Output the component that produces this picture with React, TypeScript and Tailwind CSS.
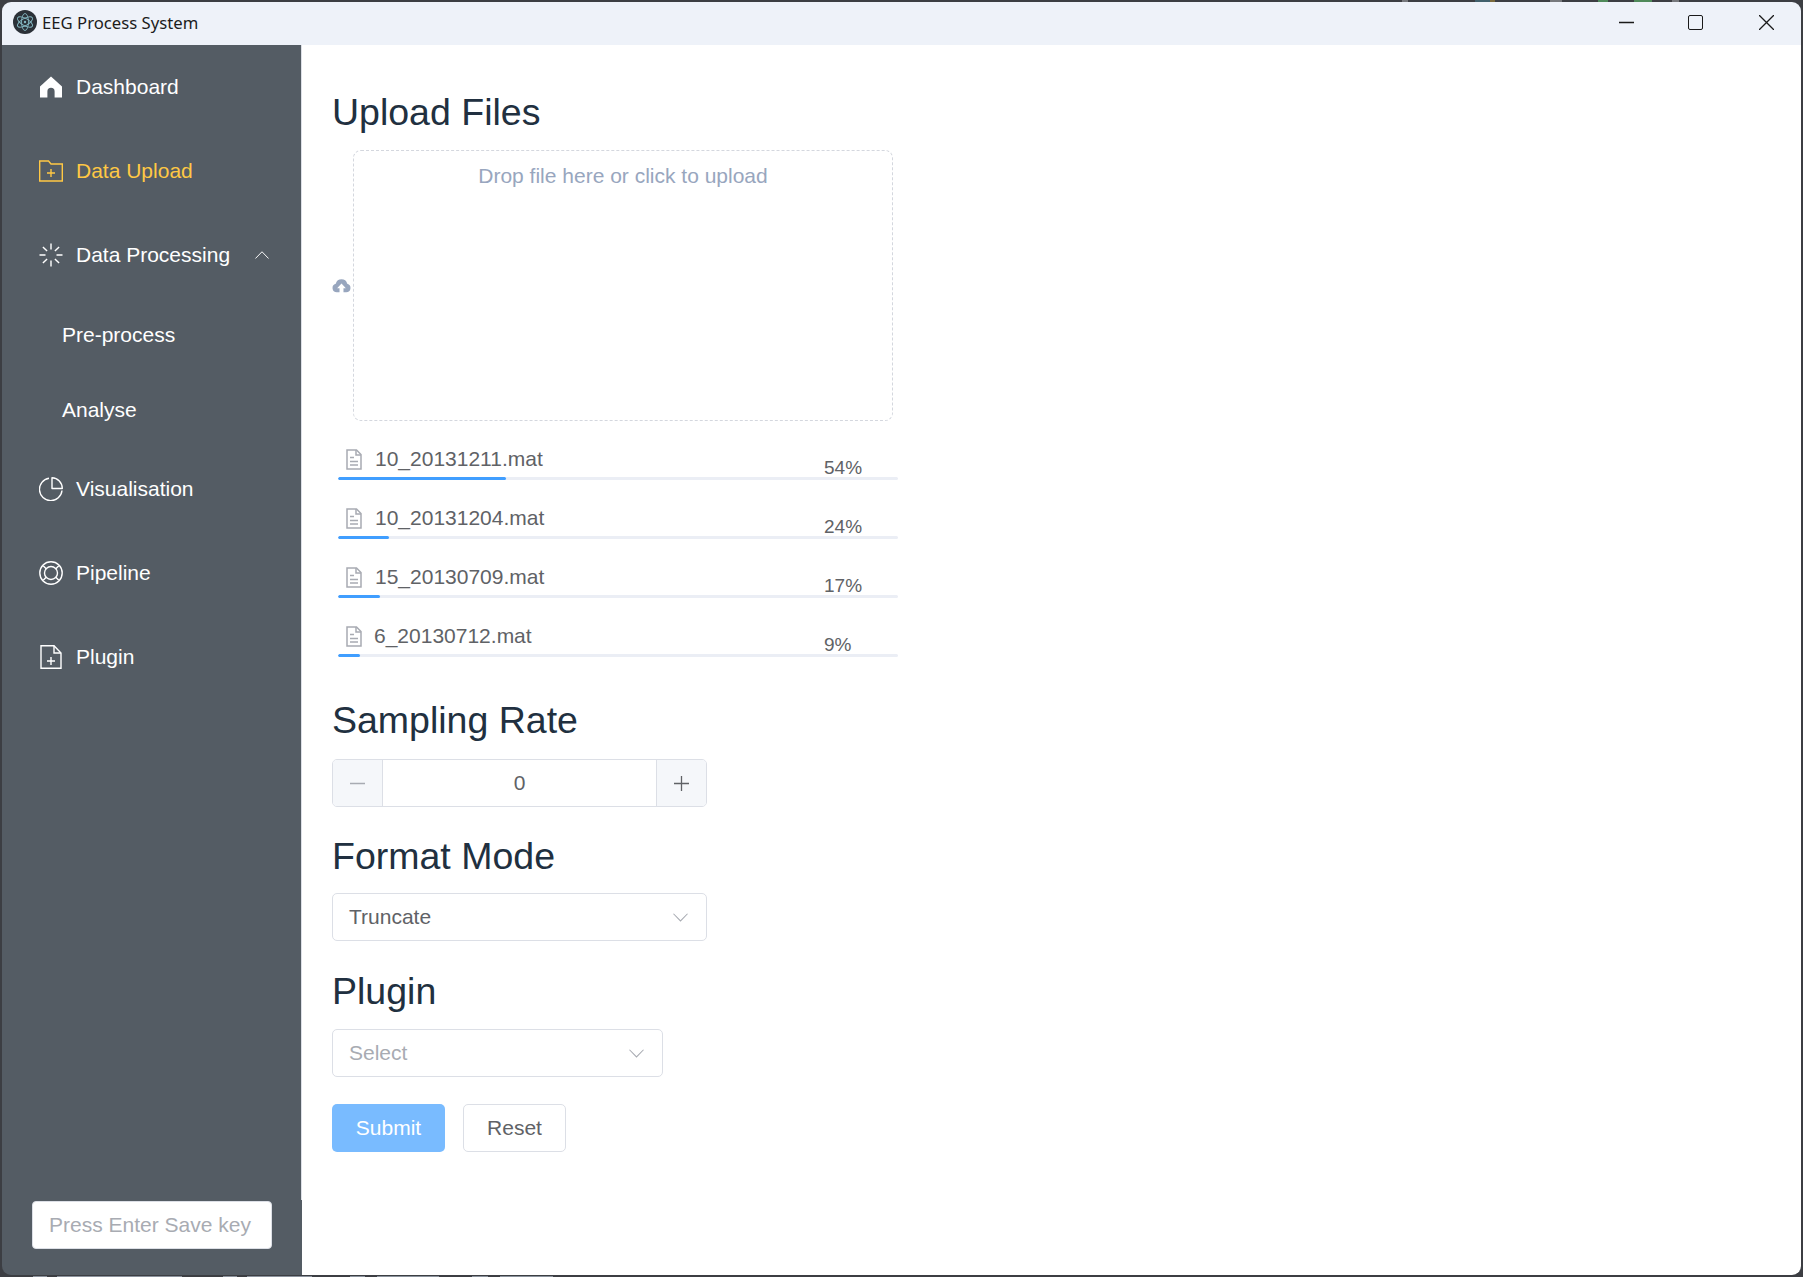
import React from 'react';

const font = 'font-["Liberation_Sans",Arial,sans-serif]';

const HomeIcon = () => (
  <svg viewBox="0 0 24 24" className="h-6 w-6" fill="white">
    <path d="M12 1.600 23 11.500V22.400H15.600V16.400A3.600 3.600 0 0 0 8.400 16.400V22.400H1V11.500Z" />
  </svg>
);

const FolderAddIcon = () => (
  <svg viewBox="0 0 24 24" className="h-6 w-6" fill="none" stroke="currentColor" strokeWidth="1.400">
    <path d="M.7 2H9.500L12 5H23.300V22H.7Z" />
    <path d="M8 14H16M12 10V18" />
  </svg>
);

const LoadingIcon = () => (
  <svg viewBox="0 0 24 24" className="h-6 w-6" fill="none" stroke="white" strokeWidth="1.400">
    <path d="M12 .5V6.500M12 17.500V23.500M.5 12H6.500M17.500 12H23.500M3.900 3.900 8.100 8.100M15.900 15.900 20.100 20.100M20.100 3.900 15.900 8.100M8.100 15.900 3.900 20.100" />
  </svg>
);

const PieIcon = () => (
  <svg viewBox="0 0 24 24" className="h-6 w-6" fill="none" stroke="white" strokeWidth="1.400">
    <path d="M10 1.200A11.300 11.300 0 1 0 23 13.500" />
    <path d="M13 .7A10.800 10.800 0 0 1 23.300 11.500H13Z" strokeLinejoin="round" />
  </svg>
);

const RingIcon = () => (
  <svg viewBox="0 0 24 24" className="h-6 w-6" fill="none" stroke="white" strokeWidth="1.400">
    <circle cx="12" cy="12" r="11.200" />
    <circle cx="12" cy="12" r="6.500" />
    <path d="M4.200 4.800 7.400 8M19.800 4.800 16.600 8M4.200 19.200 7.400 16M19.800 19.200 16.600 16" />
  </svg>
);

const DocAddIcon = () => (
  <svg viewBox="0 0 24 24" className="h-6 w-6" fill="none" stroke="white" strokeWidth="1.400">
    <path d="M2 .8H15L22 8V23.200H2Z" />
    <path d="M15 .8V8H22M8 16H16M12 12V20" />
  </svg>
);

const FileIcon = () => (
  <svg viewBox="0 0 16 21" className="h-[21px] w-[16px]" fill="none" stroke="#a8abb2" strokeWidth="1.500">
    <path d="M1 1H10.500L15 5.500V20H1Z" />
    <path d="M10 1V6H15M4 8.500H8M4 12.500H12M4 16H12" />
  </svg>
);

const CloudIcon = () => (
  <svg viewBox="0 0 24 24" className="h-[19px] w-[19px]" fill="#98a6be">
    <path d="M6 20.500A5.500 5.500 0 0 1 4.700 9.700 7.600 7.600 0 0 1 19.300 9.700 5.500 5.500 0 0 1 18 20.500H14.500V15.500H17.500L12 9.500 6.500 15.500H9.500V20.500Z" />
  </svg>
);

const AppLogo = () => (
  <svg viewBox="0 0 24 24" className="h-6 w-6">
    <circle cx="12" cy="12" r="12" fill="#2b3138" />
    <g fill="none" stroke="#84b8c2" strokeWidth="0.900">
      <ellipse cx="12" cy="12" rx="8.500" ry="3.500" transform="rotate(30 12 12)" />
      <ellipse cx="12" cy="12" rx="8.500" ry="3.500" transform="rotate(90 12 12)" />
      <ellipse cx="12" cy="12" rx="8.500" ry="3.500" transform="rotate(150 12 12)" />
    </g>
    <circle cx="12" cy="12" r="1.200" fill="#84b8c2" />
  </svg>
);

const ChevronUp = () => (
  <svg viewBox="0 0 16 9" className="h-[8px] w-[14px]" fill="none" stroke="white" strokeWidth="1.100">
    <path d="M.5 8.500 8 .8 15.500 8.500" />
  </svg>
);

const ChevronDown = () => (
  <svg viewBox="0 0 16 9" className="h-[9px] w-[15px]" fill="none" stroke="#a8abb2" strokeWidth="1.100">
    <path d="M.5 .5 8 8.200 15.500 .5" />
  </svg>
);

const Cross = ({ color, horizontalOnly = false }: { color: string; horizontalOnly?: boolean }) => (
  <svg viewBox="0 0 15 15" className="h-[15px] w-[15px]" fill="none" stroke={color} strokeWidth="1.300">
    <path d={horizontalOnly ? 'M0 7.500H15' : 'M0 7.500H15M7.500 0V15'} />
  </svg>
);

const menuRow = 'flex h-[84px] items-center pl-[37px] text-[21px] text-white';

const files = [
  { name: '10_20131211.mat', pct: 54, bar: 168 },
  { name: '10_20131204.mat', pct: 24, bar: 51 },
  { name: '15_20130709.mat', pct: 17, bar: 42 },
  { name: '6_20130712.mat', pct: 9, bar: 22 },
];

const topBits = [
  { left: 1402, width: 6, color: '#77797d' },
  { left: 1475, width: 15, color: '#41606c' },
  { left: 1490, width: 5, color: '#7a6a3c' },
  { left: 1550, width: 12, color: '#77797d' },
  { left: 1598, width: 10, color: '#4f8a5a' },
  { left: 1634, width: 18, color: '#4f8a5a' },
  { left: 1672, width: 7, color: '#77797d' },
];

const bottomBits = [
  { left: 33, width: 14 },
  { left: 57, width: 125 },
  { left: 223, width: 14 },
  { left: 247, width: 65 },
  { left: 350, width: 15 },
  { left: 377, width: 62 },
  { left: 472, width: 16 },
  { left: 500, width: 53 },
];

const headingCls = 'text-[37.500px] leading-[44px] text-[#213040]';
const bodyCls = 'text-[21px] leading-6';

const App: React.FC = () => {
  return (
    <div className={`${font} relative flex h-[1277px] w-[1803px] flex-col overflow-hidden bg-[#3c3e43] pb-[2px] pl-[2px] pr-[2px] pt-[2px]`}>
      {/* desktop peeking out behind the window */}
      {topBits.map((b) => (
        <div key={b.left} className="absolute top-0 h-[2px]" style={{ left: b.left, width: b.width, backgroundColor: b.color }} />
      ))}
      {bottomBits.map((b) => (
        <div key={b.left} className="absolute bottom-0 h-[1px] bg-[#8b929c]" style={{ left: b.left, width: b.width }} />
      ))}

      <div className="relative flex flex-1 flex-col overflow-hidden rounded-[9px]">
        {/* Title bar */}
        <div className="flex h-[43px] shrink-0 items-center bg-[#eef2f9] pb-[3px] pl-[11px]">
          <AppLogo />
          <span className='ml-[5px] mt-[2px] font-["Noto_Sans",sans-serif] text-[16.700px] text-[#1c1c1c]'>EEG Process System</span>
          <div className="ml-auto flex items-center text-[#1a1a1a]">
            <Cross color="#1a1a1a" horizontalOnly />
            <div className="ml-[54px] h-[15px] w-[15px] rounded-[2px] border-[1.500px] border-[#1a1a1a]" />
            <svg viewBox="0 0 15 15" className="ml-[56px] mr-[27px] h-[15px] w-[15px]" fill="none" stroke="#1a1a1a" strokeWidth="1.300">
              <path d="M0 0 15 15M15 0 0 15" />
            </svg>
          </div>
        </div>

        <div className="flex min-h-0 flex-1">
          {/* Sidebar */}
          <aside className="flex w-[300px] shrink-0 flex-col">
            <div className="flex-1 border-r border-[#dcdfe6] bg-[#545c64]">
              <div className={menuRow}>
                <span className="mr-[13px]"><HomeIcon /></span>Dashboard
              </div>
              <div className={`${menuRow} !text-[#ffc844]`}>
                <span className="mr-[13px]"><FolderAddIcon /></span>Data Upload
              </div>
              <div className={menuRow}>
                <span className="mr-[13px]"><LoadingIcon /></span>Data Processing
                <span className="ml-[25px]"><ChevronUp /></span>
              </div>
              <div className="flex h-[76px] items-center pl-[60px] text-[21px] text-white">Pre-process</div>
              <div className="flex h-[74px] items-center pl-[60px] text-[21px] text-white">Analyse</div>
              <div className={menuRow}>
                <span className="mr-[13px]"><PieIcon /></span>Visualisation
              </div>
              <div className={menuRow}>
                <span className="mr-[13px]"><RingIcon /></span>Pipeline
              </div>
              <div className={menuRow}>
                <span className="mr-[13px]"><DocAddIcon /></span>Plugin
              </div>
            </div>
            <div className="flex h-[75px] shrink-0 items-start bg-[#545c64] pl-[30px] pt-[1px]">
              <div className="flex h-[48px] w-[240px] items-center rounded-[4px] border border-[#dcdfe6] bg-white pl-[16px] text-[21px] text-[#a8abb2]">
                Press Enter Save key
              </div>
            </div>
          </aside>

          {/* Main */}
          <main className="flex flex-1 flex-col items-start bg-white pl-[30px] pt-[45px]">
            <h2 className={headingCls}>Upload Files</h2>

            <div className="mt-[16px] flex items-center">
              <CloudIcon />
              <div className="ml-[2px] flex h-[271px] w-[540px] justify-center rounded-[8px] border border-dashed border-[#d4d7de] pt-[13px]">
                <span className={`${bodyCls} text-[#98a6be]`}>Drop file here or click to upload</span>
              </div>
            </div>

            <ul className="mt-[18px] w-[566px] pl-[6px]">
              {files.map((f) => (
                <li key={f.name} className="relative h-[59px]">
                  <div className="flex h-[38px] items-center pt-[2px]">
                    <span className="ml-[8px] flex w-[29px] shrink-0"><FileIcon /></span>
                    <span className={`${bodyCls} text-[#606266] ${f.name.startsWith('6') ? 'ml-[-1px]' : ''}`}>{f.name}</span>
                  </div>
                  <div className="h-[3px] w-full overflow-hidden rounded-full bg-[#ebeef5]">
                    <div className="h-full rounded-full bg-[#409eff]" style={{ width: f.bar }} />
                  </div>
                  <span className="absolute left-[486px] top-[17px] text-[19px] leading-6 text-[#606266]">{f.pct}%</span>
                </li>
              ))}
            </ul>

            <h2 className={`${headingCls} mt-[23px]`}>Sampling Rate</h2>
            <div className="mt-[17px] flex h-[48px] w-[375px] overflow-hidden rounded-[5px] border border-[#dcdfe6] text-[#606266]">
              <div className="flex w-[50px] items-center justify-center border-r border-[#dcdfe6] bg-[#f5f7fa]">
                <Cross color="#a8abb2" horizontalOnly />
              </div>
              <div className={`flex flex-1 items-center justify-center ${bodyCls}`}>0</div>
              <div className="flex w-[50px] items-center justify-center border-l border-[#dcdfe6] bg-[#f5f7fa]">
                <Cross color="#606266" />
              </div>
            </div>

            <h2 className={`${headingCls} mt-[27px]`}>Format Mode</h2>
            <div className={`mt-[15px] flex h-[48px] w-[375px] items-center justify-between rounded-[5px] border border-[#dcdfe6] pl-[16px] pr-[18px] text-[#606266] ${bodyCls}`}>
              Truncate
              <ChevronDown />
            </div>

            <h2 className={`${headingCls} mt-[28px]`}>Plugin</h2>
            <div className={`mt-[16px] flex h-[48px] w-[331px] items-center justify-between rounded-[5px] border border-[#dcdfe6] pl-[16px] pr-[18px] text-[#a8abb2] ${bodyCls}`}>
              Select
              <ChevronDown />
            </div>

            <div className="mt-[27px] flex gap-[18px]">
              <div className={`flex h-[48px] w-[113px] items-center justify-center rounded-[5px] bg-[#79bbff] text-white ${bodyCls}`}>Submit</div>
              <div className={`flex h-[48px] w-[103px] items-center justify-center rounded-[5px] border border-[#dcdfe6] bg-white text-[#606266] ${bodyCls}`}>Reset</div>
            </div>
          </main>
        </div>
      </div>
    </div>
  );
};

export default App;
